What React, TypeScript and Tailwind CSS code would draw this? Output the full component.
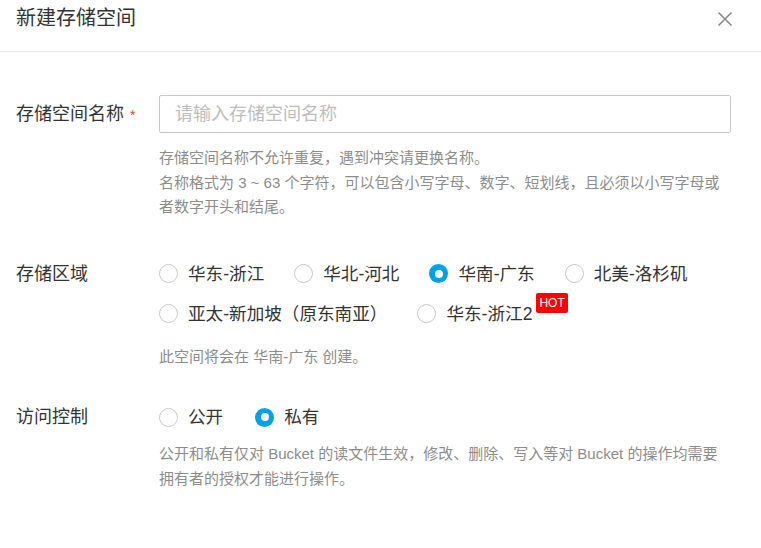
import React from "react";

const FONT = { fontFamily: '"Liberation Sans", "Noto Sans CJK SC", sans-serif' };

function Radio({ label, checked, hot }: { label: string; checked?: boolean; hot?: boolean }) {
  return (
    <div className="flex h-[40px] items-center">
      {checked ? (
        <span className="flex h-[19px] w-[19px] items-center justify-center rounded-full bg-[#00a2e3]">
          <span className="h-[8px] w-[8px] rounded-full bg-white" />
        </span>
      ) : (
        <span className="h-[19px] w-[19px] rounded-full border border-[#c8c8c8] bg-white" />
      )}
      <span className="relative ml-[10px] text-[17.6px] leading-[24px] text-[#333]">
        {label}
        {hot && (
          <span className="absolute left-[calc(100%+4px)] top-[-9px] rounded-[2px] bg-[#ff0000] px-[3px] text-[12px] leading-[20px] text-white">
            HOT
          </span>
        )}
      </span>
    </div>
  );
}

export default function App() {
  return (
    <div className="min-h-[548px] w-[761px] bg-white" style={FONT}>
      <div className="flex h-[52px] items-start justify-between border-b border-[#e8e8e8] pl-4 pr-[28px] pt-[7px]">
        <div className="text-[20px] leading-[22px] text-[#333]">新建存储空间</div>
        <svg width="16" height="16" viewBox="0 0 16 16" className="mt-[4px]">
          <path d="M1.5 1.5 L14.5 14.5 M14.5 1.5 L1.5 14.5" stroke="#888" strokeWidth="1.6" />
        </svg>
      </div>

      <div className="pl-4 pr-[30px] pt-[43px]">
        <div className="flex">
          <div className="w-[143px] shrink-0 text-[18px] leading-[38px] text-[#333]">
            存储空间名称<span className="ml-[6px] text-[14px] text-[#f04134]">*</span>
          </div>
          <div className="flex-1">
            <div className="flex h-[38px] items-center rounded-[2px] border border-[#c9c9c9] px-[15px] text-[18px] text-[#bdbdbd]">
              请输入存储空间名称
            </div>
            <div className="mt-[13px] text-[15px] leading-[24.5px] text-[#8c8c8c]">
              存储空间名称不允许重复，遇到冲突请更换名称。
              <br />
              名称格式为 3 ~ 63 个字符，可以包含小写字母、数字、短划线，且必须以小写字母或
              <br />
              者数字开头和结尾。
            </div>
          </div>
        </div>

        <div className="mt-[34px] flex">
          <div className="w-[143px] shrink-0 text-[18px] leading-[40px] text-[#333]">存储区域</div>
          <div className="flex-1">
            <div className="flex flex-wrap gap-x-[30px]">
              <Radio label="华东-浙江" />
              <Radio label="华北-河北" />
              <Radio label="华南-广东" checked />
              <Radio label="北美-洛杉矶" />
              <Radio label="亚太-新加坡（原东南亚）" />
              <Radio label="华东-浙江2" hot />
            </div>
            <div className="mt-[11px] text-[15px] leading-[24.5px] text-[#8c8c8c]">
              此空间将会在 华南-广东 创建。
            </div>
          </div>
        </div>

        <div className="mt-[28px] flex">
          <div className="w-[143px] shrink-0 text-[18px] leading-[40px] text-[#333]">访问控制</div>
          <div className="flex-1">
            <div className="flex flex-wrap gap-x-[32px]">
              <Radio label="公开" />
              <Radio label="私有" checked />
            </div>
            <div className="mt-[5px] text-[15px] leading-[24.5px] text-[#8c8c8c]">
              公开和私有仅对 Bucket 的读文件生效，修改、删除、写入等对 Bucket 的操作均需要
              <br />
              拥有者的授权才能进行操作。
            </div>
          </div>
        </div>
      </div>
    </div>
  );
}
